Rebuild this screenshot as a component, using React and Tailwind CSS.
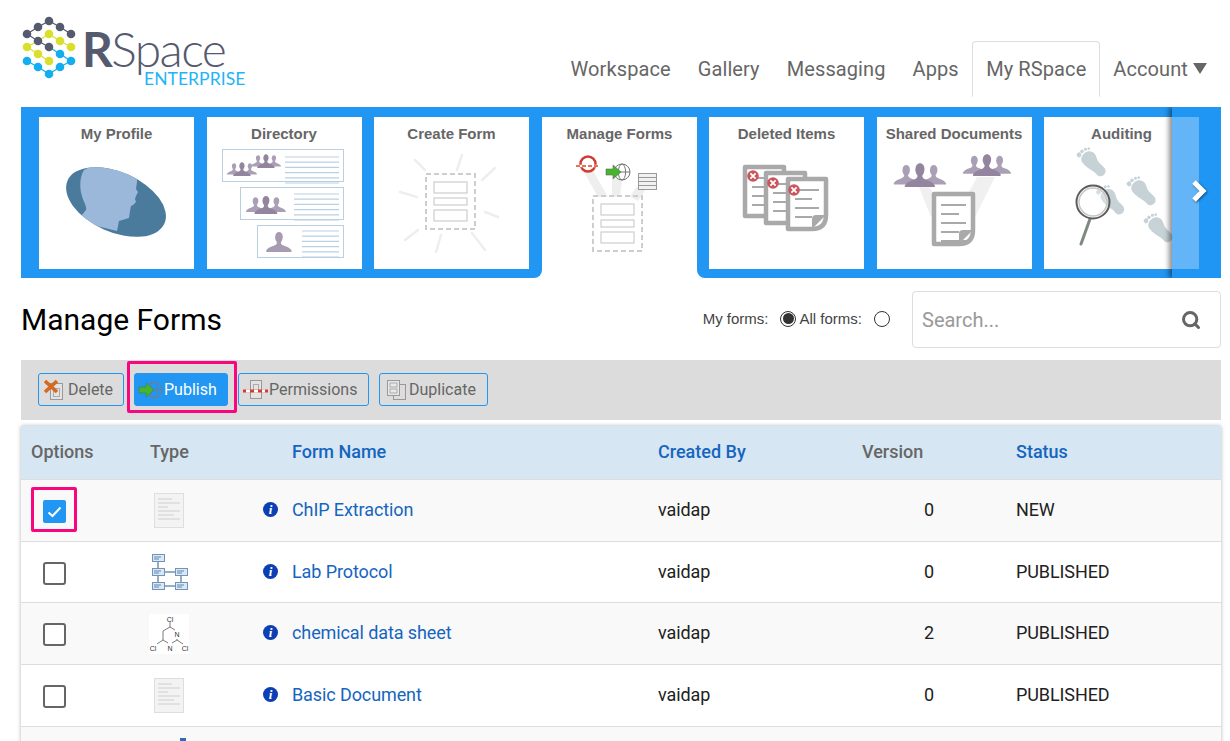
import React from 'react';
import { Search } from 'lucide-react';

const NAV = ['Workspace', 'Gallery', 'Messaging', 'Apps'];

const FORMS = [
  { name: 'ChIP Extraction', by: 'vaidap', version: 0, status: 'NEW', thumb: 'doc', checked: true, h: 'h-[62px]' },
  { name: 'Lab Protocol', by: 'vaidap', version: 0, status: 'PUBLISHED', thumb: 'flow', h: 'h-[61px]' },
  { name: 'chemical data sheet', by: 'vaidap', version: 2, status: 'PUBLISHED', thumb: 'chem', h: 'h-[62px]' },
  { name: 'Basic Document', by: 'vaidap', version: 0, status: 'PUBLISHED', thumb: 'doc', h: 'h-[62px]' },
];

function Logo() {
  const dark = [[49, 21], [38, 27], [60, 27], [27, 34], [71, 34], [38, 41], [49, 47]];
  const yellow = [[49, 34], [60, 41], [71, 47], [27, 47], [38, 54], [49, 61]];
  const blue = [[60, 54], [71, 61], [27, 61], [38, 67], [60, 67], [49, 74]];
  return (
    <div className="relative w-[240px] h-[107px] shrink-0">
      <svg width="60" height="66" viewBox="20 14 60 66" className="absolute -left-[1px] top-[14px]">
        <polyline points="27,34 38,27 49,21 60,27 71,34" fill="none" stroke="#555a6e" strokeWidth="1.2" />
        <polyline points="27,34 38,41 49,47" fill="none" stroke="#555a6e" strokeWidth="1.2" />
        <polyline points="27,47 38,41 49,34 60,41 71,47" fill="none" stroke="#d9df2a" strokeWidth="1.2" />
        <polyline points="27,47 38,54 49,61" fill="none" stroke="#d9df2a" strokeWidth="1.2" />
        <polyline points="49,47 60,54 71,61 60,67 49,74 38,67 27,61" fill="none" stroke="#12aef0" strokeWidth="1.2" />
        {dark.map(([x, y]) => <circle key={`d${x}${y}`} cx={x} cy={y} r="4.3" fill="#555a6e" />)}
        {yellow.map(([x, y]) => <circle key={`y${x}${y}`} cx={x} cy={y} r="4.3" fill="#d9df2a" />)}
        {blue.map(([x, y]) => <circle key={`b${x}${y}`} cx={x} cy={y} r="4.3" fill="#12aef0" />)}
      </svg>
      <div className="absolute left-[61px] top-[27px] leading-[44px] text-[#555a6e] whitespace-nowrap font-['Lato',sans-serif] text-[48px] tracking-[-1.6px]">
        <span className="font-bold">R</span><span className="font-light">Space</span>
      </div>
      <div className="absolute left-[123px] top-[72px] leading-[14px] text-[#1fb4f5] font-['Lato',sans-serif] text-[17.5px] tracking-[0.05px]">
        ENTERPRISE
      </div>
    </div>
  );
}

function Person({ x, y, s = 1, fill = '#93859f' }) {
  return (
    <path
      fill={fill}
      transform={`translate(${x} ${y}) scale(${s})`}
      d="M-3.6-14.5c0-2.6 1.6-4.5 3.6-4.5s3.6 1.9 3.6 4.5c0 2.4-1 4.2-1.8 5.2 0 1.4.6 2.4 2.6 3.2 3 1.1 6.6 2.4 7.6 5.1.1.3 0 1-.6 1h-23c-.6 0-.7-.7-.6-1 1-2.7 4.6-4 7.6-5.1 2-.8 2.6-1.8 2.6-3.2-.8-1-1.8-2.8-1.8-5.2z"
    />
  );
}

function People({ x, y, s = 1 }) {
  return (
    <g>
      <Person x={x - 11 * s} y={y - 2 * s} s={s * 0.82} fill="#ab9fb6" />
      <Person x={x + 11 * s} y={y - 2 * s} s={s * 0.82} fill="#ab9fb6" />
      <Person x={x} y={y} s={s} />
    </g>
  );
}

function Lines({ x, y, w, n = 6, gap = 5.2 }) {
  return (
    <g stroke="#b9d0e3" strokeWidth="1.2">
      {Array.from({ length: n }).map((_, i) => (
        <line key={i} x1={x} x2={x + w} y1={y + i * gap} y2={y + i * gap} />
      ))}
    </g>
  );
}

function FormBox({ x, y }) {
  return (
    <g fill="none" stroke="#cdcdcd">
      <rect x={x} y={y} width="49" height="55" strokeWidth="2" strokeDasharray="5 3" />
      <rect x={x + 8} y={y + 8} width="33" height="11" strokeWidth="1.2" />
      <rect x={x + 8} y={y + 24} width="33" height="7" strokeWidth="1.2" />
      <rect x={x + 8} y={y + 36} width="33" height="11" strokeWidth="1.2" />
    </g>
  );
}

function Globe({ cx, cy, r, stroke = '#777' }) {
  return (
    <g fill="none" stroke={stroke} strokeWidth="1">
      <circle cx={cx} cy={cy} r={r} />
      <ellipse cx={cx} cy={cy} rx={r * 0.45} ry={r} />
      <line x1={cx - r} x2={cx + r} y1={cy} y2={cy} />
    </g>
  );
}

function Foot({ x, y, rot = 0 }) {
  return (
    <g transform={`translate(${x} ${y}) rotate(${rot})`} fill="#c6d2d6">
      <path d="M-8-7c0-4 4-6 8-6s7 3 7 7c0 3-2 5-2 9 0 3 1 5 1 8 0 3-2 5-5 5s-5-2-5-5c0-5-4-9-4-18z" />
      <circle cx="-6" cy="-15" r="2.4" />
      <circle cx="-1.5" cy="-16" r="1.8" />
      <circle cx="2.5" cy="-15.5" r="1.5" />
      <circle cx="5.5" cy="-14" r="1.3" />
    </g>
  );
}

function Paper({ x, y, w, h, lines = 4 }) {
  return (
    <g>
      <path
        d={`M${x} ${y}h${w}v${h - 14}q0 14-14 14h-${w - 14}z`}
        fill="#fff"
        stroke="#a9a9a9"
        strokeWidth="4.5"
        strokeLinejoin="round"
      />
      <path d={`M${x + w - 14} ${y + h}v-10q0-4 4-4h10z`} fill="#a9a9a9" />
      <g stroke="#a9a9a9" strokeWidth="2">
        {Array.from({ length: lines }).map((_, i) => (
          <line key={i} x1={x + 7} x2={x + w - (i % 2 ? 14 : 7)} y1={y + 11 + i * 9} y2={y + 11 + i * 9} />
        ))}
      </g>
    </g>
  );
}

function RedX({ cx, cy }) {
  return (
    <g>
      <circle cx={cx} cy={cy} r="5.8" fill="#c9565f" />
      <path d={`M${cx - 2.6} ${cy - 2.6}l5.2 5.2m0-5.2l-5.2 5.2`} stroke="#fff" strokeWidth="1.8" />
    </g>
  );
}

function Art({ name }) {
  const rays = [[51, 53, 41, 43], [83, 53, 88, 38], [108, 63, 121, 51], [43, 80, 26, 75], [111, 95, 124, 100], [44, 113, 31, 123], [67, 118, 62, 135], [98, 116, 111, 133]];
  if (name === 'profile') {
    return (
      <>
        <defs>
          <clipPath id="profile-oval"><ellipse cx="77" cy="85" rx="53" ry="30" transform="rotate(24 77 85)" /></clipPath>
        </defs>
        <ellipse cx="77" cy="85" rx="53" ry="30" transform="rotate(24 77 85)" fill="#4a7b9d" />
        <path
          clipPath="url(#profile-oval)"
          fill="#9bb7d9"
          d="M60 45h38v20l-1 7 2 3-2 4-1 3 1 3-3 3-2 1-1 5-1 7-10 3-2 10-40-10 9-11c1-4-3-9-4-14-3-9-2-20 2-26z"
        />
      </>
    );
  }
  if (name === 'directory') {
    return (
      <>
        <g fill="none" stroke="#b9d0e3" strokeWidth="1">
          <rect x="15.5" y="32.5" width="121" height="32" />
          <rect x="33.5" y="70.5" width="103" height="32" />
          <rect x="50.5" y="108.5" width="86" height="32" />
        </g>
        <People x={35} y={59} s={0.72} />
        <People x={59} y={51} s={0.72} />
        <People x={59} y={97} s={0.95} />
        <Person x={72} y={135} s={1.05} fill="#a79bb2" />
        <Lines x={78} y={40} w={54} />
        <Lines x={87} y={77} w={45} />
        <Lines x={95} y={114} w={37} />
      </>
    );
  }
  if (name === 'create') {
    return (
      <>
        <g stroke="#eeeeee" strokeWidth="2.5" strokeLinecap="round">
          {rays.map(([a, b, c, d], i) => <line key={i} x1={a} y1={b} x2={c} y2={d} />)}
        </g>
        <FormBox x={52} y={57} />
      </>
    );
  }
  if (name === 'manage') {
    return (
      <>
        <g fill="#eeeeee">
          <polygon points="42,55 50,52 66,80 56,80" />
          <polygon points="70,62 80,62 78,80 70,80" />
          <polygon points="94,70 104,72 96,84 88,80" />
        </g>
        <FormBox x={51} y={79} />
        <circle cx="46" cy="47" r="7.5" fill="none" stroke="#d23a34" strokeWidth="2.5" />
        <line x1="34" y1="49" x2="58" y2="49" stroke="#fff" strokeWidth="2.5" />
        <line x1="34" y1="49" x2="58" y2="49" stroke="#d9481f" strokeWidth="1.5" strokeDasharray="4 2" />
        <Globe cx={80} cy={55} r={8} />
        <path d="M64 52h7v-4l8 7-8 7v-4h-7z" fill="#45b52a" stroke="#666" strokeWidth="0.6" />
        <g fill="#f1f1f1" stroke="#999" strokeWidth="1">
          <rect x="96.5" y="56.5" width="18" height="16" />
          <path d="M96.5 60.5h18M96.5 64.5h18M96.5 68.5h18" fill="none" />
        </g>
      </>
    );
  }
  if (name === 'deleted') {
    return (
      <>
        <Paper x={36} y={50} w={39} h={49} />
        <Paper x={57} y={56} w={39} h={50} />
        <Paper x={79} y={62} w={38} h={50} />
        <RedX cx={44} cy={59} />
        <RedX cx={64} cy={66} />
        <RedX cx={85} cy={73} />
      </>
    );
  }
  if (name === 'shared') {
    return (
      <>
        <polygon points="42,70 52,70 66,88 54,100" fill="#f0f0f0" />
        <polygon points="100,60 118,60 96,104 86,86" fill="#f0f0f0" />
        <People x={43} y={70} s={1.25} />
        <People x={110} y={59} s={1.15} />
        <Paper x={57} y={77} w={39} h={50} lines={5} />
      </>
    );
  }
  return (
    <>
      <Foot x={49} y={46} rot={-38} />
      <Foot x={99} y={75} rot={-38} />
      <Foot x={116} y={112} rot={-38} />
      <Foot x={68} y={84} rot={-35} />
      <line x1="46" y1="102" x2="37" y2="127" stroke="#7d8a7f" strokeWidth="3" strokeLinecap="round" />
      <circle cx="49" cy="85" r="16.5" fill="#ffffff" fillOpacity="0.3" stroke="#5c5c5c" strokeWidth="2" />
      <circle cx="49" cy="85" r="14" fill="none" stroke="#c8c8c8" strokeWidth="1.5" />
    </>
  );
}

function Tile({ title, art, active }) {
  return (
    <div className={active ? 'w-[155px] h-[161px] bg-white' : 'w-[155px] h-[152px] bg-white shrink-0'}>
      <div className="pt-[8px] text-center text-[15px] leading-[17px] font-bold text-[#666] whitespace-nowrap font-['Liberation_Sans',sans-serif]">
        {title}
      </div>
      <svg width="155" height="152" viewBox="0 0 155 152" className="-mt-[25px]">
        <Art name={art} />
      </svg>
    </div>
  );
}

function TileStrip() {
  return (
    <div className="relative flex h-[171px] shrink-0 overflow-hidden">
      <div className="flex gap-[12.5px] w-[521px] pl-[18px] pt-[10px] bg-[#2196f3] rounded-br-lg">
        <Tile title="My Profile" art="profile" />
        <Tile title="Directory" art="directory" />
        <Tile title="Create Form" art="create" />
      </div>
      <div className="w-[155px] pt-[10px] bg-white relative">
        <div className="absolute inset-x-0 top-0 h-[10px] bg-[#2196f3]" />
        <Tile title="Manage Forms" art="manage" active />
      </div>
      <div className="flex gap-[12.5px] w-[524px] pl-[12px] pt-[10px] bg-[#2196f3] rounded-bl-lg">
        <Tile title="Deleted Items" art="deleted" />
        <Tile title="Shared Documents" art="shared" />
        <Tile title="Auditing" art="auditing" />
      </div>
      <div className="absolute right-0 top-0 bottom-0 w-[49px] bg-[#2196f3]/70 shadow-[-3px_0_5px_rgba(0,0,0,0.45)] flex items-center justify-center pl-[5px]">
        <svg width="20" height="26" viewBox="0 0 20 26" className="drop-shadow-[1px_1px_1px_rgba(0,0,0,0.5)] -mt-[3px]">
          <polyline points="5,4 14,13 5,22" fill="none" stroke="#fff" strokeWidth="5" />
        </svg>
      </div>
    </div>
  );
}

function Radio({ checked }) {
  return (
    <span className="w-[16px] h-[16px] rounded-full border border-[#333] bg-white flex items-center justify-center shrink-0">
      {checked && <span className="w-[11px] h-[11px] rounded-full bg-[#333]" />}
    </span>
  );
}

function TitleRow() {
  return (
    <div className="flex items-center h-[82px] shrink-0 pt-[1px]">
      <h1 className="text-[30px] leading-none text-black font-normal">Manage Forms</h1>
      <div className="ml-auto flex items-center text-[15px] text-[#444] font-['Liberation_Sans',sans-serif] -mt-[2px]">
        <span className="mt-[2px]">My forms:</span>
        <span className="ml-[12px]"><Radio checked /></span>
        <span className="ml-[3px] mt-[2px]">All forms:</span>
        <span className="ml-[12px]"><Radio /></span>
      </div>
      <div className="ml-[22px] w-[309px] h-[57px] border border-[#ddd] rounded-[4px] bg-white flex items-center pl-[9px] pr-[19px]">
        <span className="text-[20px] text-[#999]">Search...</span>
        <Search className="ml-auto w-[20px] h-[20px] text-[#666]" strokeWidth={3.6} />
      </div>
    </div>
  );
}

function BtnIcon({ kind }) {
  if (kind === 'publish') {
    return (
      <svg width="26" height="20" viewBox="0 0 26 20">
        <Globe cx={16} cy={10} r={8} stroke="#6f7f8f" />
        <path d="M1 7h7V3l8 7-8 7v-4H1z" fill="#45b52a" stroke="#4a7a55" strokeWidth="0.6" />
      </svg>
    );
  }
  if (kind === 'delete') {
    return (
      <svg width="20" height="24" viewBox="0 0 20 24">
        <rect x="6.5" y="5.5" width="12" height="16" fill="#e3e3e3" stroke="#999" />
        <rect x="9.5" y="10.5" width="6" height="8" fill="none" stroke="#aaa" />
        <path d="M1 3l12 11M13 3L1 14" stroke="#d4691f" strokeWidth="3.6" />
      </svg>
    );
  }
  if (kind === 'permissions') {
    return (
      <svg width="26" height="22" viewBox="0 0 26 22">
        <rect x="7.5" y="1.5" width="11" height="18" fill="#e3e3e3" stroke="#999" />
        <rect x="10.5" y="5.5" width="5" height="5" fill="none" stroke="#aaa" />
        <line x1="0" y1="12" x2="25" y2="12" stroke="#d23a34" strokeWidth="3" />
        <line x1="3" y1="12" x2="22" y2="12" stroke="#fff" strokeWidth="3" strokeDasharray="4 4" />
      </svg>
    );
  }
  return (
    <svg width="21" height="22" viewBox="0 0 21 22">
      <rect x="7.5" y="5.5" width="12" height="15" fill="#ddd" stroke="#999" />
      <rect x="1.5" y="1.5" width="12" height="15" fill="#e8e8e8" stroke="#999" />
      <rect x="4" y="4" width="7" height="4" fill="none" stroke="#aaa" />
      <rect x="4" y="10" width="7" height="4" fill="none" stroke="#aaa" />
    </svg>
  );
}

function Toolbar() {
  const base = 'h-[33px] rounded-[3px] border flex items-center text-[16px] pt-[1px]';
  return (
    <div className="h-[60px] shrink-0 bg-[#dcdcdc] flex items-start pt-[13px] pl-[17px]">
      <button className={`${base} w-[86px] border-[#2196f3] text-[#666] pl-[5px]`}>
        <BtnIcon kind="delete" /><span className="ml-[4px]">Delete</span>
      </button>
      <button className={`${base} relative ml-[10px] w-[94px] border-[#2196f3] bg-[#2196f3] text-white pl-[3px]`}>
        <BtnIcon kind="publish" /><span>Publish</span>
        <span className="absolute -left-[8px] -right-[10px] -top-[13px] -bottom-[8px] border-[3px] border-[#f9067f] rounded-[2px]" />
      </button>
      <button className={`${base} ml-[10px] w-[131px] border-[#2196f3] text-[#666] pl-[4px]`}>
        <BtnIcon kind="permissions" /><span>Permissions</span>
      </button>
      <button className={`${base} ml-[10px] w-[109px] border-[#2196f3] text-[#666] pl-[6px]`}>
        <BtnIcon kind="duplicate" /><span className="ml-[2px]">Duplicate</span>
      </button>
    </div>
  );
}

function Flowchart() {
  const box = (x, y) => (
    <g key={`${x}-${y}`}>
      <rect x={x + 0.5} y={y + 0.5} width="12" height="7" fill="#dbe7f3" stroke="#6f94bd" />
      <line x1={x + 2} x2={x + 9} y1={y + 3} y2={y + 3} stroke="#5f86b3" />
      <line x1={x + 2} x2={x + 7} y1={y + 5} y2={y + 5} stroke="#5f86b3" />
    </g>
  );
  return (
    <svg width="37" height="37" viewBox="0 0 37 37">
      <g stroke="#2c5a94" strokeWidth="1">
        <path d="M7 8v6M7 22v6M30 22v6M13 18h11M24 32H13" fill="none" />
      </g>
      {box(1, 0)}{box(1, 14)}{box(24, 14)}{box(1, 28)}{box(24, 28)}
    </svg>
  );
}

function Thumb({ kind }) {
  if (kind === 'flow') return <div className="pl-[1px]"><Flowchart /></div>;
  if (kind === 'chem') {
    return (
      <svg width="40" height="40" viewBox="0 0 40 40" className="bg-white -ml-[1px]">
        <path d="M21 8v5M21 13l-7 4M21 13l5 3M14 17v9M14 26l5 3M23 29l5-3M28 26v-1M14 26l-6 4M28 26l6 4" fill="none" stroke="#444" strokeWidth="0.7" />
        <g fontSize="7" fontFamily="Liberation Sans, sans-serif" fill="#333" textAnchor="middle">
          <text x="21" y="8">Cl</text>
          <text x="28" y="23">N</text>
          <text x="21" y="37">N</text>
          <text x="4" y="37">Cl</text>
          <text x="36" y="37">Cl</text>
        </g>
      </svg>
    );
  }
  return (
    <svg width="30" height="35" viewBox="0 0 30 35" className="ml-[4px]">
      <rect x="0.5" y="0.5" width="29" height="34" fill="#f3f3f3" stroke="#dedede" />
      <g stroke="#cfcfcf" strokeWidth="1">
        <path d="M4 6h14M4 10h22M4 14h10M4 18h22M4 22h16M4 26h22" fill="none" />
      </g>
    </svg>
  );
}

function Checkbox({ checked }) {
  if (checked) {
    return (
      <span className="relative w-[23px] h-[23px] rounded-[2px] bg-[#2196f3] flex items-center justify-center">
        <svg width="15" height="12" viewBox="0 0 15 12">
          <polyline points="1.5,6.5 5.5,10 13.5,1.5" fill="none" stroke="#fff" strokeWidth="2" />
        </svg>
        <span className="absolute -left-[12px] -right-[11px] -top-[13px] -bottom-[9px] border-[3px] border-[#f9067f] rounded-[2px]" />
      </span>
    );
  }
  return <span className="w-[23px] h-[23px] rounded-[3px] border-2 border-[#666] bg-white" />;
}

const COLS = 'grid grid-cols-[119px_110px_398px_204px_154px_215px]';

function InfoDot() {
  return (
    <span className="w-[15px] h-[15px] rounded-full bg-[#0b3fb3] text-white flex items-center justify-center text-[13px] font-bold italic leading-none font-['Liberation_Serif',serif] shrink-0">
      i
    </span>
  );
}

function FormRow({ form, odd }) {
  return (
    <div className={`${COLS} ${form.h} items-center border-b border-[#ddd] text-[18px] tracking-[-0.1px] text-[#212121] ${odd ? 'bg-[#f9f9f9]' : 'bg-white'}`}>
      <div className="pl-[22px] flex items-center pt-[2px]"><Checkbox checked={form.checked} /></div>
      <div className="pl-[10px]"><Thumb kind={form.thumb} /></div>
      <div className="pl-[13px] pb-[2px] flex items-center gap-[14px]">
        <InfoDot />
        <a className="text-[#1565c0]">{form.name}</a>
      </div>
      <div className="pl-[10px] pb-[2px]">{form.by}</div>
      <div className="pr-[72px] pb-[2px] text-right">{form.version}</div>
      <div className="pl-[10px] pb-[2px]">{form.status}</div>
    </div>
  );
}

function FormsTable() {
  return (
    <div className="mt-[6px] shrink-0 shadow-[0_0_4px_rgba(0,0,0,0.3)]">
      <div className={`${COLS} h-[54px] pb-[2px] items-center bg-[#d6e7f3] border-b border-[#ddd] text-[18px] font-medium`}>
        <div className="pl-[10px] text-[#666]">Options</div>
        <div className="pl-[10px] text-[#666]">Type</div>
        <div className="pl-[42px] text-[#1565c0]">Form Name</div>
        <div className="pl-[10px] text-[#1565c0]">Created By</div>
        <div className="pl-[10px] text-[#666]">Version</div>
        <div className="pl-[10px] text-[#1565c0]">Status</div>
      </div>
      {FORMS.map((f, i) => <FormRow key={f.name} form={f} odd={i % 2 === 0} />)}
      <div className="h-[60px] bg-[#f9f9f9] pl-[159px] pt-[11px]"><div className="w-[6px] h-[3px] bg-[#2f6cb5]" /></div>
    </div>
  );
}

export default function App() {
  return (
    <div className="h-screen overflow-hidden bg-white pl-[21px] pr-[9px] flex flex-col font-['Roboto',sans-serif]">
      <header className="flex items-start h-[107px] shrink-0">
        <Logo />
        <nav className="ml-auto mt-[41px] flex items-start text-[20px] tracking-[0.1px] text-[#666] h-[56px]">
          {NAV.map((n) => (
            <a key={n} className="h-[55px] flex items-center px-[13.5px]">{n}</a>
          ))}
          <a className="h-[56px] w-[128px] flex items-center justify-center border border-[#ddd] border-b-white rounded-t-[4px] bg-white">My RSpace</a>
          <a className="h-[55px] flex items-center pl-[13px] pr-[14px]">
            Account
            <svg width="14" height="11" viewBox="0 0 14 11" className="ml-[5px]"><path d="M0 0h14L7 11z" fill="#666" /></svg>
          </a>
        </nav>
      </header>
      <TileStrip />
      <TitleRow />
      <Toolbar />
      <FormsTable />
    </div>
  );
}
